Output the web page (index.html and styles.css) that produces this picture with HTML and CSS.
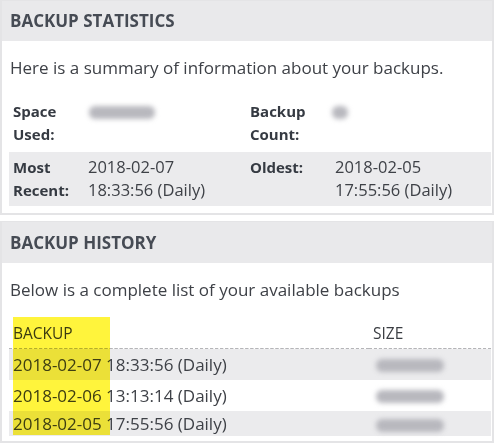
FILE: index.html
```html
<!DOCTYPE html>
<html>
<head>
<meta charset="utf-8">
<link rel="stylesheet" href="styles.css">
</head>
<body>
<section class="panel panel-stats">
  <h2 class="panel-head">BACKUP STATISTICS</h2>
  <div class="panel-body">
    <p class="intro">Here is a summary of information about your backups.</p>
    <table class="stats">
      <colgroup><col class="c1"><col class="c2"><col class="c3"><col class="c4"></colgroup>
      <tr>
        <th>Space Used:</th>
        <td><span class="blur blur-wide"></span></td>
        <th>Backup Count:</th>
        <td><span class="blur blur-small"></span></td>
      </tr>
      <tr class="alt">
        <th>Most Recent:</th>
        <td>2018-02-07 18:33:56 (Daily)</td>
        <th>Oldest:</th>
        <td>2018-02-05 17:55:56 (Daily)</td>
      </tr>
    </table>
  </div>
</section>
<section class="panel panel-history">
  <h2 class="panel-head">BACKUP HISTORY</h2>
  <div class="panel-body">
    <p class="intro">Below is a complete list of your available backups</p>
    <div class="history-wrap">
      <table class="history">
        <colgroup><col class="h1"><col class="h2"></colgroup>
        <thead>
          <tr><th>BACKUP</th><th>SIZE</th></tr>
        </thead>
        <tbody>
          <tr class="alt"><td>2018-02-07 18:33:56 (Daily)</td><td><span class="blur blur-size"></span></td></tr>
          <tr><td>2018-02-06 13:13:14 (Daily)</td><td><span class="blur blur-size"></span></td></tr>
          <tr class="alt"><td>2018-02-05 17:55:56 (Daily)</td><td><span class="blur blur-size"></span></td></tr>
        </tbody>
      </table>
      <div class="highlight"></div>
    </div>
  </div>
</section>
</body>
</html>
```

FILE: styles.css
```css
html, body {
  margin: 0;
  padding: 0;
  background: #ffffff;
}
body {
  font-family: "Open Sans", "DejaVu Sans", sans-serif;
  color: #3e4147;
  width: 495px;
  height: 443px;
  overflow: hidden;
}
.panel {
  width: 490px;
  border: 2px solid #e4e4e6;
  border-top-width: 1px;
  background: #fff;
}
.panel-history {
  margin-top: 6px;
}
.panel-head {
  margin: 0;
  height: 40px;
  line-height: 40px;
  padding: 0 0 0 8px;
  background: #e9e9eb;
  color: #464b54;
  font-size: 17px;
  font-weight: 700;
  letter-spacing: 0;
}
.panel-history .panel-head {
  height: 41px;
  line-height: 42px;
}
.panel-body {
  padding: 0 1px 5px 7px;
}
.intro {
  margin: 0;
  padding: 16px 0 15px 1px;
  font-size: 17px;
  line-height: 22px;
  color: #3e4147;
}
.stats {
  width: 482px;
  border-collapse: separate;
  border-spacing: 0 2px;
  table-layout: fixed;
  font-size: 15px;
  line-height: 22.5px;
}
.stats .c1 { width: 75px; }
.stats .c2 { width: 162px; }
.stats .c3 { width: 85px; }
.stats .c4 { width: 160px; }
.stats th, .stats td {
  text-align: left;
  vertical-align: top;
  padding: 4px 4px 5px 4px;
}
.stats th {
  font-weight: 700;
  color: #353a42;
}
.stats td {
  color: #3e4147;
  font-size: 16.5px;
  padding-right: 12px;
}
.stats tr.alt th, .stats tr.alt td {
  background: #ebebed;
}
.blur {
  display: inline-block;
  height: 13px;
  background: #b8b8be;
  border-radius: 6px;
  filter: blur(2.5px);
  vertical-align: middle;
}
.blur-wide {
  width: 66px;
  margin-left: 1px;
}
.blur-small {
  width: 16px;
  margin-left: -3px;
}
.history-wrap {
  position: relative;
  padding-top: 2px;
}
.history {
  width: 482px;
  border-collapse: collapse;
  table-layout: fixed;
}
.history .h1 { width: 360px; }
.history .h2 { width: 122px; }
.history th {
  text-align: left;
  font-weight: 400;
  font-size: 15.5px;
  color: #3a3d42;
  height: 30px;
  padding: 0 4px;
  border-bottom: 1px dashed #b5b5b8;
}
.history td {
  font-size: 17px;
  height: 31px;
  line-height: 24px;
  padding: 0 4px;
  color: #3e4147;
  white-space: nowrap;
}
.history tbody tr:last-child td {
  height: 24px;
  vertical-align: top;
  padding-top: 1px;
  line-height: 23px;
}
.history tr.alt td {
  background: #ebebed;
}
.blur-size {
  width: 68px;
  margin-left: 3px;
}
.highlight {
  position: absolute;
  left: 4px;
  top: 1px;
  width: 97px;
  height: 118px;
  background: #fff43c;
  mix-blend-mode: multiply;
  pointer-events: none;
}
```
